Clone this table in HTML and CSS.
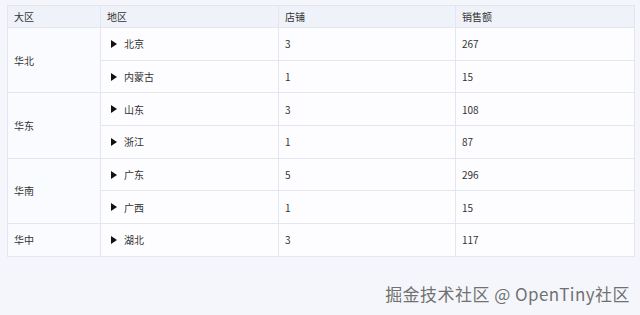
FILE: index.html
```html
<!DOCTYPE html>
<html lang="zh">
<head>
<meta charset="utf-8">
<link rel="stylesheet" href="styles.css">
</head>
<body>
<div class="page">
  <table class="grid">
    <colgroup>
      <col class="c1"><col class="c2"><col class="c3"><col class="c4">
    </colgroup>
    <thead>
      <tr><th>大区</th><th>地区</th><th>店铺</th><th>销售额</th></tr>
    </thead>
    <tbody>
      <tr><td rowspan="2" class="area">华北</td><td><span class="tree"><svg class="caret" width="6" height="8" viewBox="0 0 6 8"><path d="M0 0L6 4L0 8Z"/></svg>北京</span></td><td>3</td><td>267</td></tr>
      <tr><td><span class="tree"><svg class="caret" width="6" height="8" viewBox="0 0 6 8"><path d="M0 0L6 4L0 8Z"/></svg>内蒙古</span></td><td>1</td><td>15</td></tr>
      <tr><td rowspan="2" class="area">华东</td><td><span class="tree"><svg class="caret" width="6" height="8" viewBox="0 0 6 8"><path d="M0 0L6 4L0 8Z"/></svg>山东</span></td><td>3</td><td>108</td></tr>
      <tr><td><span class="tree"><svg class="caret" width="6" height="8" viewBox="0 0 6 8"><path d="M0 0L6 4L0 8Z"/></svg>浙江</span></td><td>1</td><td>87</td></tr>
      <tr><td rowspan="2" class="area">华南</td><td><span class="tree"><svg class="caret" width="6" height="8" viewBox="0 0 6 8"><path d="M0 0L6 4L0 8Z"/></svg>广东</span></td><td>5</td><td>296</td></tr>
      <tr><td><span class="tree"><svg class="caret" width="6" height="8" viewBox="0 0 6 8"><path d="M0 0L6 4L0 8Z"/></svg>广西</span></td><td>1</td><td>15</td></tr>
      <tr><td class="area">华中</td><td><span class="tree"><svg class="caret" width="6" height="8" viewBox="0 0 6 8"><path d="M0 0L6 4L0 8Z"/></svg>湖北</span></td><td>3</td><td>117</td></tr>
    </tbody>
  </table>
  <div class="mark">掘金技术社区 @ OpenTiny社区</div>
</div>
</body>
</html>
```
FILE: styles.css
```css
html, body {
  margin: 0;
  padding: 0;
}
body {
  width: 640px;
  height: 315px;
  overflow: hidden;
  background: #f4f6fb;
  font-family: "Noto Sans CJK SC", "Noto Sans", sans-serif;
  color: #333;
}
.page {
  padding: 5px 6px 0 7px;
  display: flex;
  flex-direction: column;
}
.grid {
  width: 627px;
  border-collapse: collapse;
  table-layout: fixed;
  font-size: 10px;
  background: #fdfdff;
}
.c1 { width: 93px; }
.c2 { width: 178px; }
.c3 { width: 177px; }
.c4 { width: 179px; }
.grid th, .grid td {
  border: 1px solid #e3e6ee;
  text-align: left;
  padding: 0 6px;
  font-weight: normal;
  vertical-align: middle;
}
.grid th {
  height: 21px;
  background: #eff2f9;
  color: #333;
}
.grid td {
  height: 31.7px;
}
.grid td.area {
  background: #fafbfe;
}
.tree {
  display: flex;
  align-items: center;
  gap: 7px;
  padding-left: 4px;
}
.caret {
  fill: #111;
  flex: none;
}
.mark {
  align-self: flex-end;
  margin-top: 26px;
  margin-right: 4px;
  font-size: 17px;
  line-height: 22px;
  color: #707070;
  letter-spacing: 0.45px;
  text-shadow: 0 0 1px #ffffff;
}
```
